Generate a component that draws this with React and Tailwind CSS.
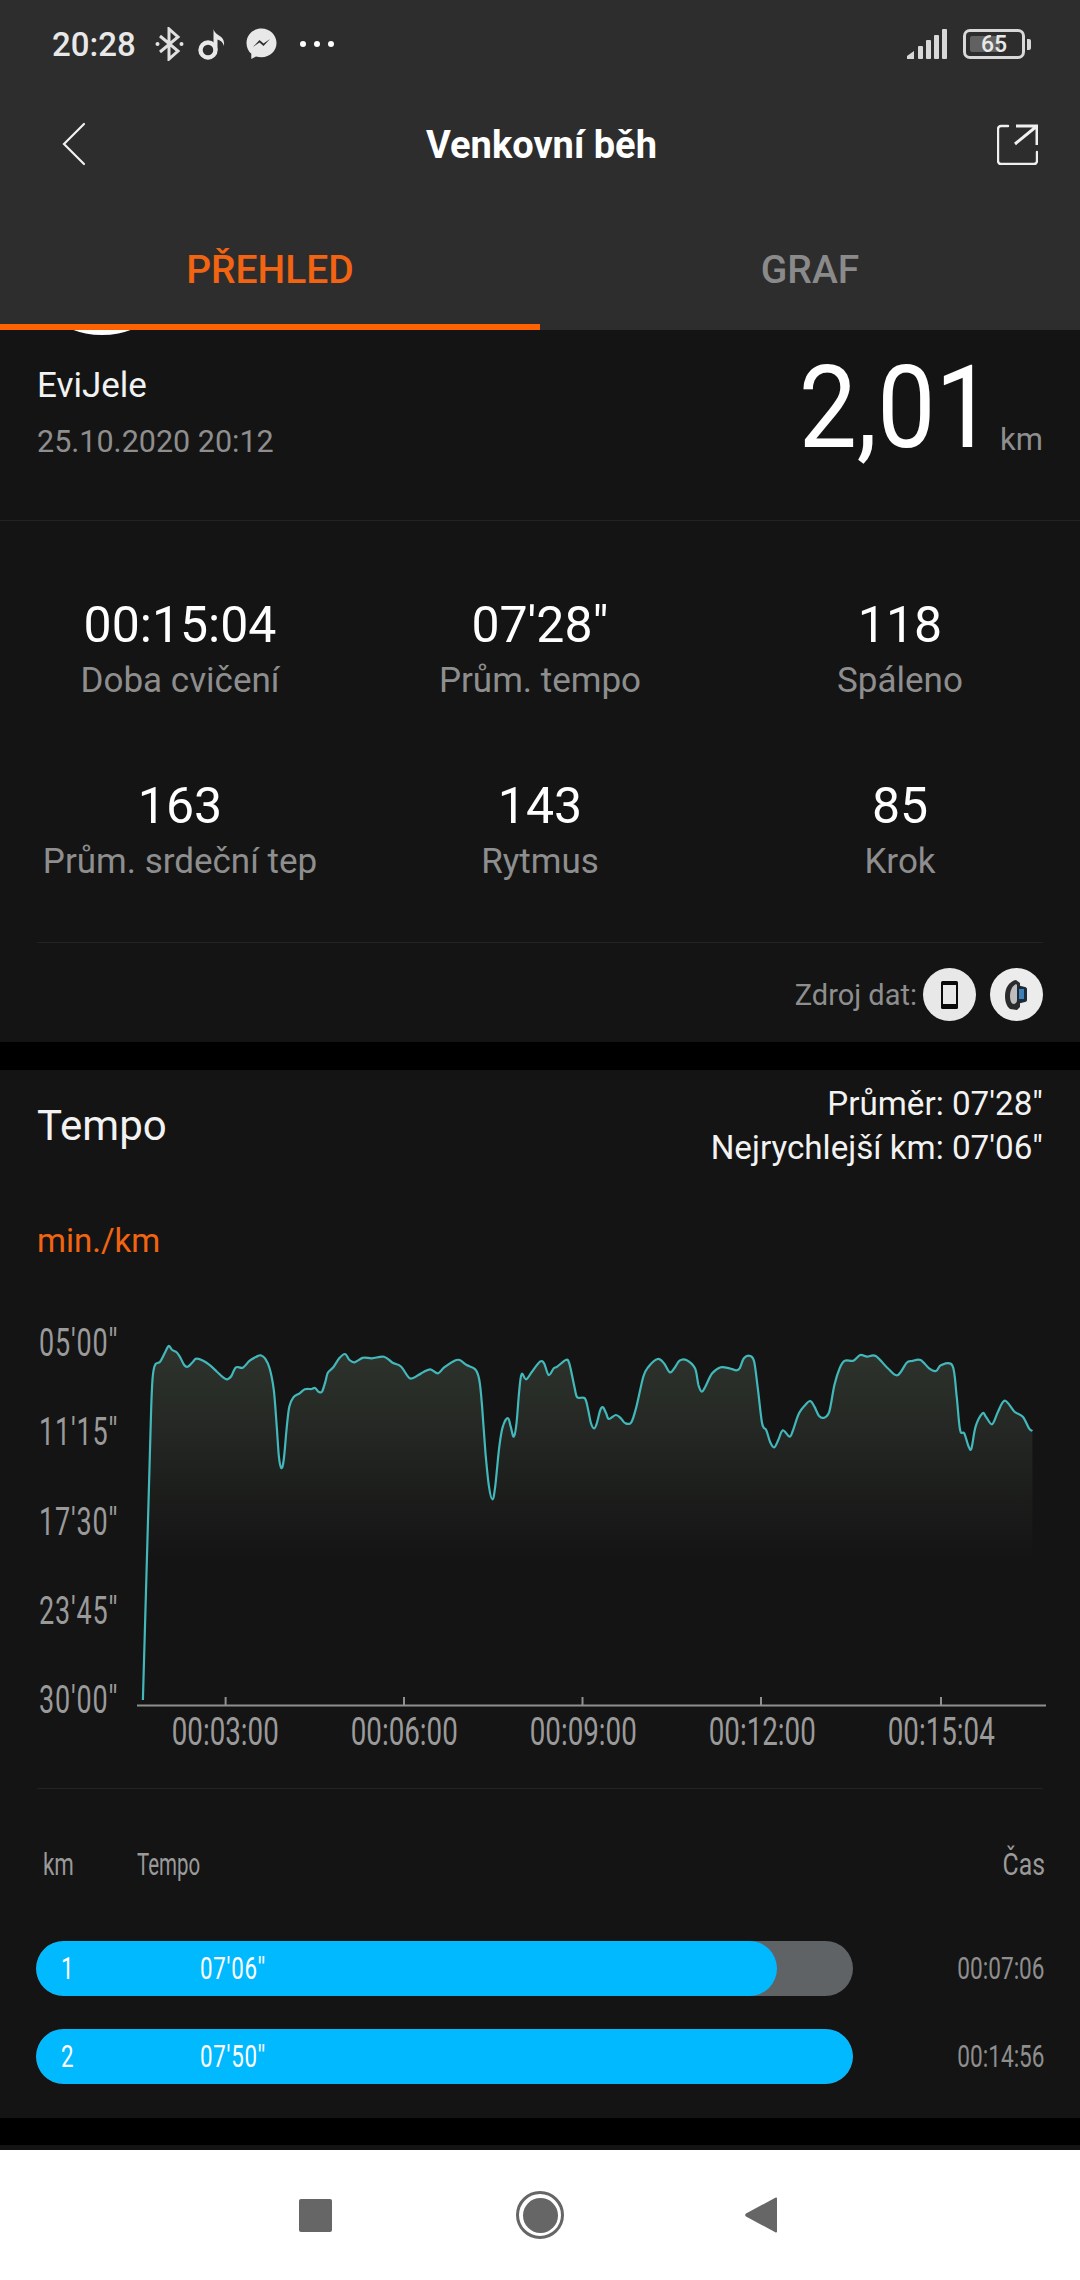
const a = [[415,1230],[435,500],[441,300],[446,240],[452,222],[465,215],[478,190],[490,168],[500,180],[512,186],[522,200],[535,225],[545,230],[558,218],[570,206],[590,212],[610,226],[630,245],[648,262],[660,268],[672,258],[685,232],[705,233],[725,212],[745,200],[757,196],[770,206],[783,235],[795,300],[803,400],[810,500],[817,534],[824,510],[832,420],[840,350],[852,322],[870,310],[885,298],[905,297],[915,294],[925,305],[935,305],[945,275],[952,248],[968,232],[985,205],[1002,192],[1015,210],[1030,217],[1055,203],[1080,205],[1115,200],[1140,218],[1165,230],[1190,265],[1215,255],[1230,246],[1250,238],[1272,250],[1290,232],[1320,212],[1335,210],[1355,225],[1380,238],[1392,270],[1400,350],[1410,490],[1420,590],[1430,628],[1438,590],[1450,470],[1460,410],[1475,384],[1483,410],[1492,440],[1500,400],[1508,300],[1515,252],[1528,268],[1545,245]];
const b = [[0,215],[12,220],[25,255],[40,235],[50,230],[75,210],[85,220],[100,290],[108,322],[130,325],[140,360],[148,400],[157,415],[165,400],[175,360],[183,352],[192,370],[200,387],[220,375],[235,385],[248,400],[265,397],[280,350],[300,260],[315,230],[342,207],[360,220],[377,247],[390,235],[405,212],[425,210],[450,235],[460,285],[470,305],[480,290],[500,250],[525,232],[550,235],[570,241],[580,235],[592,205],[610,198],[622,215],[632,290],[645,400],[657,420],[668,455],[680,472],[692,450],[705,421],[725,440],[735,420],[752,370],[770,345],[785,333],[797,350],[810,377],[825,383],[840,365],[855,285],[870,235],[885,212],[910,212],[930,195],[950,200],[975,198],[1010,235],[1038,256],[1065,218],[1080,213],[1105,210],[1130,235],[1150,243],[1165,225],[1198,227],[1210,320],[1220,420],[1232,430],[1245,470],[1253,475],[1265,410],[1285,370],[1295,380],[1313,403],[1330,365],[1350,332],[1378,365],[1402,380],[1420,415],[1430,423]];

// chart origin in page pixels is (137, 1323)
const pts = [
  ...a.map(([x, y]) => [x / 2.904 - 137, 1290 + y / 3 - 1323]),
  ...b.map(([x, y]) => [540 + x / 2.904 - 137, 1290 + y / 3 - 1323]),
];

function smooth(p) {
  let d = `M${p[0][0].toFixed(1)} ${p[0][1].toFixed(1)}`;
  for (let i = 0; i < p.length - 1; i++) {
    const p0 = p[Math.max(i - 1, 0)];
    const p1 = p[i];
    const p2 = p[i + 1];
    const p3 = p[Math.min(i + 2, p.length - 1)];
    const k = 1 / 6;
    d += `C${(p1[0] + (p2[0] - p0[0]) * k).toFixed(1)} ${(p1[1] + (p2[1] - p0[1]) * k).toFixed(1)} ${(p2[0] - (p3[0] - p1[0]) * k).toFixed(1)} ${(p2[1] - (p3[1] - p1[1]) * k).toFixed(1)} ${p2[0].toFixed(1)} ${p2[1].toFixed(1)}`;
  }
  return d;
}
const line = smooth(pts);
const last = pts[pts.length - 1];
const area = `${line}L${last[0].toFixed(1)} 300L${pts[2][0].toFixed(1)} 300Z`;
const ticks = [225.6, 404, 582.5, 761, 941];

function StatusBar() {
  return (
    <div className="flex h-[88px] items-center pl-[52px] pr-[49px]">
      <span className="w-[103px] text-[33px] font-medium leading-none text-[#e8e8e8]">20:28</span>
      <svg width="29" height="34" viewBox="0 0 29 34" fill="none" stroke="#e0e0e0" strokeWidth="3">
        <path d="M14 17V2l9 8-18 15 M14 17v15l9-8L5 9" />
        <circle cx="2.5" cy="17" r="2" fill="#e3e3e3" stroke="none" />
        <circle cx="26.5" cy="17" r="2" fill="#e3e3e3" stroke="none" />
      </svg>
      <svg className="ml-[14px]" width="28" height="32" viewBox="0 0 28 32" fill="none">
        <circle cx="10" cy="22" r="7.5" stroke="#e8e8e8" strokeWidth="4.4" />
        <path d="M15.5 22V1c1 4 4 5.500 7 7.500 3 2.200 4 5.500 3.500 9.500-1-3.500-3-5.500-6.500-6.500V22z" fill="#e8e8e8" />
      </svg>
      <svg className="ml-[20px]" width="31" height="32" viewBox="0 0 31 32">
        <path d="M15.500 0.500C7 0.500 0.500 6.700 0.500 15c0 4.400 1.800 8.200 4.800 10.800V31l4.700-2.600c1.700.5 3.500.8 5.500.8 8.500 0 15-6.300 15-14.200S24 .5 15.500.5z" fill="#e8e8e8" />
        <path d="M7 19l6.500-7 4 3.500L24 11l-6.500 7-4-3.500z" fill="#2d2d2d" />
      </svg>
      <div className="ml-[23px] flex gap-[8px]">
        <span className="h-[6px] w-[6px] rounded-full bg-white" />
        <span className="h-[6px] w-[6px] rounded-full bg-white" />
        <span className="h-[6px] w-[6px] rounded-full bg-white" />
      </div>
      <div className="ml-auto flex items-center">
        <svg width="40" height="30" viewBox="0 0 40 30" fill="#d8d8d8">
          <path d="M0 30v-3l7-5v8z" />
          <rect x="11" y="17" width="5" height="13" rx="1" />
          <rect x="19" y="11" width="5" height="19" rx="1" />
          <rect x="27" y="6" width="5" height="24" rx="1" />
          <rect x="35" y="0" width="5" height="30" rx="1" />
        </svg>
        <div className="relative ml-[16px] flex h-[30px] w-[62px] items-center justify-center rounded-[7px] border-[3px] border-[#d8d8d8]">
          <div className="absolute bottom-[4px] left-[4px] top-[4px] w-[30px] rounded-[2px] bg-[#616161]" />
          <span className="relative text-[23px] font-medium leading-none text-[#e8e8e8]">65</span>
        </div>
        <div className="ml-[2px] h-[11px] w-[4px] rounded-r-[2px] bg-[#d8d8d8]" />
      </div>
    </div>
  );
}

function AppBar() {
  return (
    <div className="flex h-[112px] items-center justify-between pl-[62px] pr-[42px]">
      <svg width="24" height="44" viewBox="0 0 24 44" fill="none" stroke="#f0f0f0" strokeWidth="2.200" strokeLinecap="round">
        <path d="M22 2 2 22l20 20" />
      </svg>
      <span className="pt-[2px] text-[38px] font-bold leading-none text-white">Venkovní běh</span>
      <svg width="41" height="41" viewBox="0 0 41 41" fill="none" stroke="#f0f0f0" strokeWidth="2.400" strokeLinecap="round">
        <path d="M11 2H4a3 3 0 0 0-3 3v32a3 3 0 0 0 3 3h33a3 3 0 0 0 3-3v-9" />
        <path d="M19 2h21v19M40 2 18 20" strokeWidth="3" strokeLinecap="butt" />
      </svg>
    </div>
  );
}

function Tabs() {
  return (
    <div className="flex h-[130px] items-stretch">
      <div className="flex w-[540px] items-center justify-center border-b-[6px] border-[#ff6200] pt-[17px]">
        <span className="text-[39px] font-medium leading-none text-[#f26411]">PŘEHLED</span>
      </div>
      <div className="flex w-[540px] items-center justify-center pt-[11px]">
        <span className="text-[39px] font-medium leading-none text-[#8a8a8a]">GRAF</span>
      </div>
    </div>
  );
}

function Stat({ value, label }) {
  return (
    <div className="flex flex-col items-center">
      <span className="h-[56px] pt-[1px] text-[50px] leading-[56px] text-white">{value}</span>
      <span className="mt-[9px] h-[40px] text-[35px] leading-[40px] text-[#8e8e8e]">{label}</span>
    </div>
  );
}

function OverviewCard() {
  return (
    <div className="relative h-[712px] overflow-hidden bg-[#141414]">
      <div className="absolute left-[18px] top-[-163px] h-[168px] w-[168px] rounded-full bg-white" />
      <div className="absolute right-[37px] top-[-26px] text-[28px] leading-[34px] text-[#888]">Mi Fit · Venkovní běh</div>
      <div className="flex h-[191px] justify-between border-b border-[#232323] pl-[37px] pr-[37px]">
        <div className="flex flex-col pt-[37px]">
          <span className="text-[35px] leading-[38px] text-[#f2f2f2]">EviJele</span>
          <span className="mt-[18px] text-[30.500px] leading-[38px] text-[#8e8e8e]">25.10.2020 20:12</span>
        </div>
        <div className="flex items-start pt-[20px]">
          <span className="inline-block origin-right scale-x-[.9] text-[115px] leading-[115px] text-white">2,01</span>
          <span className="ml-[7px] mt-[71px] text-[31px] leading-[38px] text-[#8e8e8e]">km</span>
        </div>
      </div>
      <div className="grid grid-cols-3 gap-y-[76px] pb-[60px] pt-[75px]">
        <Stat value="00:15:04" label="Doba cvičení" />
        <Stat value={"07'28\""} label="Prům. tempo" />
        <Stat value="118" label="Spáleno" />
        <Stat value="163" label="Prům. srdeční tep" />
        <Stat value="143" label="Rytmus" />
        <Stat value="85" label="Krok" />
      </div>
      <div className="mx-[37px] flex h-[99px] items-center justify-end border-t border-[#232323] pt-[5px]">
        <span className="mr-[6px] text-[29px] leading-[36px] text-[#8e8e8e]">Zdroj dat:</span>
        <div className="flex h-[53px] w-[53px] items-center justify-center rounded-full bg-[#e8e8e8]">
          <svg width="17" height="28" viewBox="0 0 17 28">
            <rect width="17" height="28" rx="1.500" fill="#0a0a0a" />
            <rect x="2" y="4" width="13" height="19" fill="#e8e8e8" />
          </svg>
        </div>
        <div className="ml-[14px] flex h-[53px] w-[53px] items-center justify-center rounded-full bg-[#ececec]">
          <svg width="24" height="30" viewBox="0 0 24 30">
            <path d="M11 0C5 1 0 7 0 16c0 6 2 11 5 13l7 1 3-3V3z" fill="#2b2b2b" />
            <path d="M11 4C7 6 5 11 5 16c0 4 1 7 3 8 3 0 4-2 4-4V5z" fill="#bdbdbd" />
            <path d="M12 5l8 2c1 0 2 1 2 2v11c0 1-1 2-2 2l-8 2z" fill="#1d2a3a" />
            <rect x="14" y="9" width="5" height="10" fill="#3f7fb8" />
          </svg>
        </div>
      </div>
    </div>
  );
}

function Narrow({ children, className = "" }) {
  return <span className={`inline-block whitespace-nowrap ${className}`}>{children}</span>;
}

function TempoCard() {
  return (
    <div className="h-[1048px] bg-[#141414]">
      <div className="flex items-center justify-between pl-[37px] pr-[37px] pt-[12px]">
        <span className="text-[42px] leading-[44px] text-[#f2f2f2]">Tempo</span>
        <div className="flex flex-col items-end text-[33.200px] leading-[44px] text-[#f2f2f2]">
          <span>{"Průměr: 07'28\""}</span>
          <span>{"Nejrychlejší km: 07'06\""}</span>
        </div>
      </div>
      <div className="mt-[51px] pl-[37px] text-[33px] leading-[40px] text-[#f26411]">min./km</div>

      <div className="mt-[62px] flex">
        <div className="flex h-[397px] w-[137px] flex-col justify-between pl-[39px] text-[38px] leading-[40px] tracking-[1.200px] text-[#9a9a9a]">
          <div><Narrow className="origin-left scale-x-[.71]">{"05'00''"}</Narrow></div>
          <div><Narrow className="origin-left scale-x-[.71]">{"11'15''"}</Narrow></div>
          <div><Narrow className="origin-left scale-x-[.71]">{"17'30''"}</Narrow></div>
          <div><Narrow className="origin-left scale-x-[.71]">{"23'45''"}</Narrow></div>
          <div><Narrow className="origin-left scale-x-[.71]">{"30'00''"}</Narrow></div>
        </div>
        <svg width="910" height="390" viewBox="0 0 910 390" fill="none">
          <defs>
            <linearGradient id="fade" x1="0" y1="20" x2="0" y2="235" gradientUnits="userSpaceOnUse">
              <stop offset="0" stopColor="#2f342d" />
              <stop offset="1" stopColor="#141414" />
            </linearGradient>
          </defs>
          <path d={area} fill="url(#fade)" />
          <path d={line} stroke="#42b8ba" strokeWidth="2.200" />
          <path d="M0 382.500H909" stroke="#8f8f8f" strokeWidth="2" />
          {ticks.map((t) => (
            <path key={t} d={`M${t - 137} 374V382`} stroke="#8f8f8f" strokeWidth="2" />
          ))}
        </svg>
      </div>
      <div className="-mt-[8px] flex pl-[136px] text-[38px] leading-[40px] text-[#9a9a9a]">
        {["00:03:00", "00:06:00", "00:09:00", "00:12:00", "00:15:04"].map((t) => (
          <div key={t} className="flex w-[179px] justify-center">
            <Narrow className="scale-x-[.73]">{t}</Narrow>
          </div>
        ))}
      </div>

      <div className="mx-[37px] mt-[36px] border-t border-[#232323]" />

      <div className="mt-[56px] flex h-[40px] items-center pr-[35px] text-[31px] leading-[40px] text-[#9a9a9a]">
        <div className="w-[137px] pl-[43px]"><Narrow className="origin-left scale-x-[.72]">km</Narrow></div>
        <Narrow className="origin-left scale-x-[.66]">Tempo</Narrow>
        <Narrow className="ml-auto origin-right scale-x-[.8]">Čas</Narrow>
      </div>

      <div className="mt-[56px] flex flex-col gap-[33px] pl-[36px] pr-[35px]">
        <Row n="1" pace={"07'06''"} time="00:07:06" fill="w-[741px]" />
        <Row n="2" pace={"07'50''"} time="00:14:56" fill="w-full" />
      </div>
    </div>
  );
}

function Row({ n, pace, time, fill }) {
  return (
    <div className="flex items-center">
      <div className="relative h-[55px] w-[817px] overflow-hidden rounded-full bg-[#5f6365]">
        <div className={`flex h-full items-center rounded-full bg-[#00b9ff] pl-[25px] text-[31px] leading-[40px] text-white ${fill}`}>
          <Narrow className="w-[139px] origin-left scale-x-[.72]">{n}</Narrow>
          <Narrow className="origin-left scale-x-[.72] tracking-[1px]">{pace}</Narrow>
        </div>
      </div>
      <Narrow className="ml-auto origin-right scale-x-[.73] text-[31px] leading-[40px] text-[#8e8e8e]">{time}</Narrow>
    </div>
  );
}

function NavBar() {
  return (
    <div className="flex h-[130px] items-center bg-white pl-[299px]">
      <div className="h-[33px] w-[33px] rounded-[2px] bg-[#666]" />
      <div className="ml-[184px] flex h-[48px] w-[48px] items-center justify-center rounded-full border-[3px] border-[#666]">
        <div className="h-[35px] w-[35px] rounded-full bg-[#666]" />
      </div>
      <svg className="ml-[181px]" width="32" height="36" viewBox="0 0 32 36">
        <path d="M32 1.500v33a1 1 0 0 1-1.700.7L1 19.500a2 2 0 0 1 0-3L30.300.8A1 1 0 0 1 32 1.500z" fill="#666" />
      </svg>
    </div>
  );
}

export default function App() {
  return (
    <div className="flex h-[2280px] w-[1080px] flex-col overflow-hidden bg-black font-['Roboto',sans-serif]">
      <div className="bg-[#2d2d2d]">
        <StatusBar />
        <AppBar />
        <Tabs />
      </div>
      <OverviewCard />
      <div className="h-[28px] shrink-0 bg-black" />
      <TempoCard />
      <div className="h-[27px] shrink-0 bg-black" />
      <div className="h-[5px] shrink-0 bg-[#141414]" />
      <NavBar />
    </div>
  );
}
